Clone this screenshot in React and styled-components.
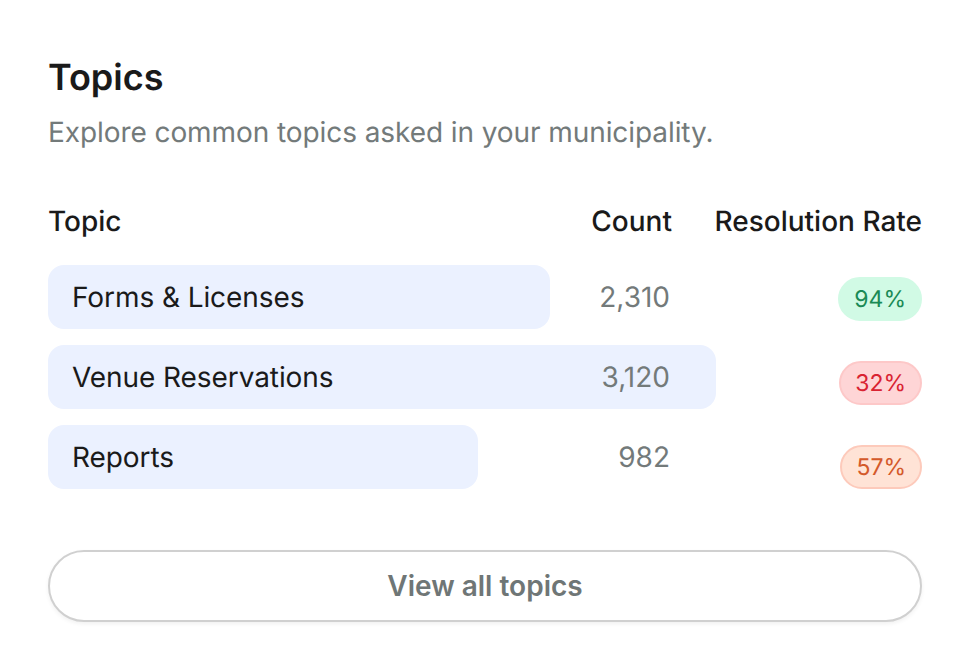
import styled, { createGlobalStyle } from "styled-components";

const topics = [
  { name: "Forms & Licenses", count: "2,310", rate: "94%", tone: "good", barWidth: 502 },
  { name: "Venue Reservations", count: "3,120", rate: "32%", tone: "bad", barWidth: 668 },
  { name: "Reports", count: "982", rate: "57%", tone: "warn", barWidth: 430 },
];

const tones = {
  good: { bg: "#d1fae5", border: "#d1fae5", color: "#1a8a55" },
  bad: { bg: "#fed5d6", border: "#fdc8c8", color: "#d92332" },
  warn: { bg: "#ffe3d6", border: "#fdcabb", color: "#d4592a" },
};

const App = () => {
  return (
    <Card>
      <GlobalStyle />
      <Title>Topics</Title>
      <Subtitle>Explore common topics asked in your municipality.</Subtitle>
      <HeaderRow>
        <HeaderCell>Topic</HeaderCell>
        <HeaderCell $right>Count</HeaderCell>
        <HeaderCell $right>Resolution Rate</HeaderCell>
      </HeaderRow>
      <Body>
        <Rows>
          {topics.map(t => (
            <Row key={t.name}>
              <Bar style={{ width: t.barWidth }} />
              <TopicName>{t.name}</TopicName>
              <Count>{t.count}</Count>
            </Row>
          ))}
        </Rows>
        <Badges>
          {topics.map(t => (
            <Badge key={t.name} $tone={t.tone}>{t.rate}</Badge>
          ))}
        </Badges>
      </Body>
      <ViewAll>View all topics</ViewAll>
    </Card>
  );
};

export default App;

const GlobalStyle = createGlobalStyle`
  body {
    margin: 0;
    background: #fff;
    font-family: Inter, "Liberation Sans", sans-serif;
    text-rendering: geometricPrecision;
  }
`;

const Card = styled.div`
  display: flex;
  flex-direction: column;
  width: 970px;
  height: 670px;
  box-sizing: border-box;
  padding: 57px 48px 0;
`;

const Title = styled.h1`
  margin: 0;
  font-size: 36px;
  line-height: 40px;
  font-weight: 600;
  color: #1a1a1a;
`;

const Subtitle = styled.p`
  margin: 15px 0 0;
  font-size: 28px;
  line-height: 40px;
  font-weight: 400;
  letter-spacing: -0.08px;
  color: #737a7a;
`;

const HeaderRow = styled.div`
  display: grid;
  grid-template-columns: 1fr 100px 250px;
  margin-top: 49px;
`;

const HeaderCell = styled.div`
  font-size: 28px;
  line-height: 40px;
  font-weight: 500;
  color: #1a1a1a;
  text-align: ${props => (props.$right ? "right" : "left")};
`;

const Body = styled.div`
  display: flex;
  margin-top: 24px;
`;

const Rows = styled.div`
  flex: 1;
  display: flex;
  flex-direction: column;
  gap: 16px;
`;

const Row = styled.div`
  position: relative;
  display: flex;
  justify-content: space-between;
  align-items: center;
  height: 64px;
`;

const Bar = styled.div`
  position: absolute;
  left: 0;
  top: 0;
  bottom: 0;
  background: #ebf1ff;
  border-radius: 16px;
`;

const TopicName = styled.div`
  position: relative;
  padding-left: 24px;
  font-size: 28px;
  line-height: 40px;
  letter-spacing: -0.08px;
  color: #1a1a1a;
`;

const Count = styled.div`
  position: relative;
  padding-right: 2px;
  font-size: 28px;
  line-height: 40px;
  color: #737a7a;
`;

const Badges = styled.div`
  width: 250px;
  display: flex;
  flex-direction: column;
  align-items: flex-end;
  gap: 40px;
  padding-top: 12px;
`;

const Badge = styled.span`
  box-sizing: border-box;
  height: 44px;
  padding: 0 14px;
  display: inline-flex;
  align-items: center;
  border-radius: 22px;
  border: 2px solid ${props => tones[props.$tone].border};
  background: ${props => tones[props.$tone].bg};
  color: ${props => tones[props.$tone].color};
  font-size: 23px;
  font-weight: 400;
`;

const ViewAll = styled.button`
  margin-top: 61px;
  height: 72px;
  box-sizing: border-box;
  border: 2px solid #d0d0d0;
  border-radius: 36px;
  background: #fff;
  box-shadow: 0 2px 4px rgba(0, 0, 0, 0.06);
  font-family: inherit;
  font-size: 28px;
  font-weight: 600;
  color: #6f7676;
`;
